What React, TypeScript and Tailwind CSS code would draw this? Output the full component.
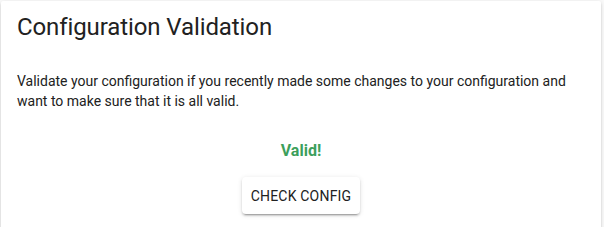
export default function App() {
  return (
    <div
      className="h-[227px] w-[604px] overflow-hidden bg-[#fafafa] pr-[3px]"
      style={{ fontFamily: "Roboto, 'Liberation Sans', sans-serif" }}
    >
      <div className="ml-[1px] mt-[1px] h-[240px] w-[600px] rounded-[2px] bg-white text-[#212121] shadow-[0_2px_2px_0_rgba(0,0,0,0.14),0_1px_5px_0_rgba(0,0,0,0.12),0_3px_1px_-2px_rgba(0,0,0,0.2)]">
        <div className="px-4 pt-[10px] text-[24px] leading-[32px] tracking-[-0.1px]">
          Configuration Validation
        </div>
        <div className="px-4 pt-[28px] text-[14px] leading-[20px] text-[#212121]">
          Validate your configuration if you recently made some changes to your
          configuration and want to make sure that it is all valid.
        </div>
        <div className="flex flex-col items-center pt-[28px]">
          <div className="text-[16px] font-bold leading-[24px] text-[#3d9f5c]">
            Valid!
          </div>
          <button className="mt-[14px] h-[37px] rounded-[4px] bg-white px-[9px] text-[14px] leading-[20px] tracking-[0.2px] text-[#212121] shadow-[0_3px_1px_-2px_rgba(0,0,0,0.2),0_2px_2px_0_rgba(0,0,0,0.14),0_1px_5px_0_rgba(0,0,0,0.12)]">
            CHECK CONFIG
          </button>
        </div>
      </div>
    </div>
  );
}
